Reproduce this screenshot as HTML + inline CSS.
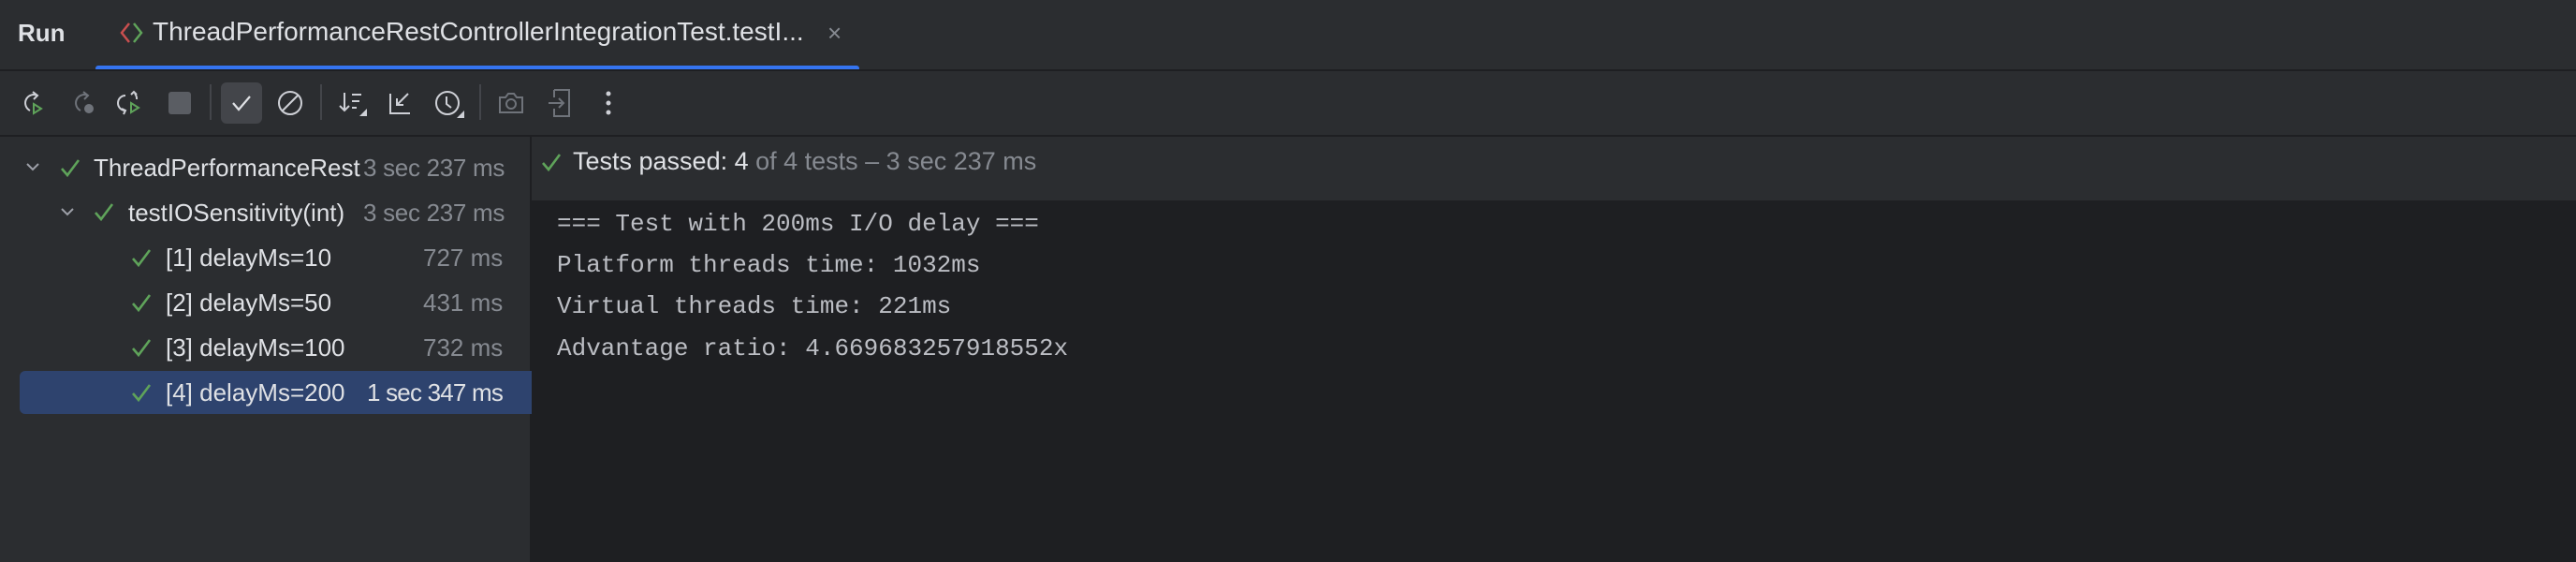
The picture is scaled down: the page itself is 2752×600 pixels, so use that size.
<!DOCTYPE html>
<html><head><style>
*{margin:0;padding:0;box-sizing:border-box}
body{width:2752px;height:600px;background:#2b2d30;position:relative;overflow:hidden;font-family:"Liberation Sans",sans-serif;color:#dfe1e5}
.abs{position:absolute}
.t{font-size:26px;white-space:nowrap;line-height:30px}
.gray{color:#868a91}
.mono{font-family:"Liberation Mono",monospace;font-size:26px;color:#bcbec4;white-space:nowrap;line-height:30px}
svg{position:absolute;overflow:visible}
</style></head><body>
<!-- tab bar -->
<div class="abs t" style="left:19px;top:20px;font-weight:bold">Run</div>
<svg style="left:126px;top:22px" width="30" height="26" viewBox="0 0 30 26"><path d="M12 3 L4 13 L12 23" fill="none" stroke="#c94f4f" stroke-width="2.5"/><path d="M17 3 L25 13 L17 23" fill="none" stroke="#5fa35a" stroke-width="2.5"/></svg>
<div class="abs t" style="left:163px;top:19px;font-size:28px">ThreadPerformanceRestControllerIntegrationTest.testI...</div>
<div class="abs t gray" style="left:884px;top:20px">×</div>
<div class="abs" style="left:102px;top:70px;width:816px;height:6px;background:#3574f0;border-radius:3px"></div>
<div class="abs" style="left:0;top:74px;width:2752px;height:2px;background:#1e1f22"></div>
<!-- toolbar -->
<div class="abs" style="left:236px;top:88px;width:44px;height:44px;background:#43454a;border-radius:6px"></div>
<div class="abs" style="left:224px;top:90px;width:2px;height:38px;background:#43454a"></div>
<div class="abs" style="left:342px;top:90px;width:2px;height:38px;background:#43454a"></div>
<div class="abs" style="left:512px;top:90px;width:2px;height:38px;background:#43454a"></div>
<svg style="left:22px;top:96px" width="28" height="28" viewBox="0 0 28 28" fill="none" stroke-width="2"><path d="M10 22 A8 8 0 1 1 18 6" stroke="#ced0d6"/><path d="M13 2 L18 6 L14 10" stroke="#ced0d6"/><path d="M14 15 L22 20 L14 25Z" stroke="#5fa35a"/></svg>
<svg style="left:76px;top:96px" width="28" height="28" viewBox="0 0 28 28" fill="none" stroke-width="2"><path d="M10 22 A8 8 0 1 1 18 6" stroke="#6f737a"/><path d="M13 2 L18 6 L14 10" stroke="#6f737a"/><circle cx="19" cy="20" r="5" fill="#6f737a"/></svg>
<svg style="left:126px;top:96px" width="28" height="28" viewBox="0 0 28 28" fill="none" stroke-width="2"><path d="M8 6 A8 8 0 0 0 8 22" stroke="#ced0d6"/><path d="M4 20 L8 22 L6 26" stroke="#ced0d6"/><path d="M18 4 A8 8 0 0 1 20 10" stroke="#ced0d6"/><path d="M14 5 L17 2 L20 5" stroke="#ced0d6"/><path d="M14 14 L22 19 L14 24Z" stroke="#5fa35a"/></svg>
<div class="abs" style="left:180px;top:98px;width:24px;height:24px;background:#5a5d63;border-radius:3px"></div>
<svg style="left:246px;top:98px" width="24" height="24" viewBox="0 0 24 24" fill="none" stroke="#dfe1e5" stroke-width="2.2"><path d="M3 12 L9 19 L21 5"/></svg>
<svg style="left:296px;top:96px" width="28" height="28" viewBox="0 0 28 28" fill="none" stroke="#ced0d6" stroke-width="2"><circle cx="14" cy="14" r="12"/><path d="M6 22 L22 6"/></svg>
<svg style="left:362px;top:96px" width="32" height="30" viewBox="0 0 32 30" fill="none" stroke="#ced0d6" stroke-width="2"><path d="M6 3 V22 M1 17 L6 22 L11 17"/><path d="M14 5 H24 M14 12 H22 M14 19 H19"/><path d="M30 20 V28 H22Z" fill="#ced0d6" stroke="none"/></svg>
<svg style="left:414px;top:96px" width="28" height="28" viewBox="0 0 28 28" fill="none" stroke="#ced0d6" stroke-width="2"><path d="M3 4 V25 H24"/><path d="M22 4 L10 16 M10 9 V16 H17"/></svg>
<svg style="left:464px;top:96px" width="34" height="32" viewBox="0 0 34 32" fill="none" stroke="#ced0d6" stroke-width="2"><circle cx="14" cy="14" r="12"/><path d="M13 7 V15 L18 19"/><path d="M32 22 V30 H24Z" fill="#ced0d6" stroke="none"/></svg>
<svg style="left:532px;top:97px" width="28" height="26" viewBox="0 0 28 26" fill="none" stroke="#6f737a" stroke-width="2"><path d="M2 7 H8 L11 3 H17 L20 7 H26 V23 H2Z"/><circle cx="14" cy="14" r="5"/></svg>
<svg style="left:586px;top:94px" width="26" height="32" viewBox="0 0 26 32" fill="none" stroke="#6f737a" stroke-width="2"><path d="M6 2 H22 V30 H6 V22 M6 10 V2"/><path d="M0 16 H16 M11 11 L16 16 L11 21"/></svg>
<svg style="left:646px;top:96px" width="8" height="28" viewBox="0 0 8 28" fill="#ced0d6"><circle cx="4" cy="4" r="2.5"/><circle cx="4" cy="14" r="2.5"/><circle cx="4" cy="24" r="2.5"/></svg>
<div class="abs" style="left:0;top:144px;width:2752px;height:2px;background:#1e1f22"></div>
<!-- left panel -->
<div class="abs" style="left:566px;top:146px;width:2px;height:454px;background:#1e1f22"></div>
<div class="abs" style="left:21px;top:396px;width:547px;height:46px;background:#2e436e;border-radius:6px 0 0 6px"></div>
<svg style="left:27px;top:170px" width="16" height="16" viewBox="0 0 16 16" fill="none" stroke="#9da0a8" stroke-width="2"><path d="M2 5 L8 11 L14 5"/></svg>
<svg style="left:64px;top:168px" width="22" height="22" viewBox="0 0 22 22" fill="none" stroke="#5fa35a" stroke-width="2.6"><path d="M2 12 L8 19 L20 3"/></svg>
<div class="abs t" style="left:100px;top:164px;width:285px;overflow:hidden">ThreadPerformanceRestControllerIntegrationTest</div>
<div class="abs t gray" style="left:388px;top:164px;letter-spacing:-0.3px">3 sec 237 ms</div>
<svg style="left:64px;top:218px" width="16" height="16" viewBox="0 0 16 16" fill="none" stroke="#9da0a8" stroke-width="2"><path d="M2 5 L8 11 L14 5"/></svg>
<svg style="left:100px;top:215px" width="22" height="22" viewBox="0 0 22 22" fill="none" stroke="#5fa35a" stroke-width="2.6"><path d="M2 12 L8 19 L20 3"/></svg>
<div class="abs t" style="left:137px;top:212px;width:248px;overflow:hidden">testIOSensitivity(int)</div>
<div class="abs t gray" style="left:388px;top:212px;letter-spacing:-0.3px">3 sec 237 ms</div>
<svg style="left:140px;top:264px" width="22" height="22" viewBox="0 0 22 22" fill="none" stroke="#5fa35a" stroke-width="2.6"><path d="M2 12 L8 19 L20 3"/></svg>
<div class="abs t" style="left:177px;top:260px">[1] delayMs=10</div>
<div class="abs t gray" style="left:452px;top:260px">727 ms</div>
<svg style="left:140px;top:312px" width="22" height="22" viewBox="0 0 22 22" fill="none" stroke="#5fa35a" stroke-width="2.6"><path d="M2 12 L8 19 L20 3"/></svg>
<div class="abs t" style="left:177px;top:308px">[2] delayMs=50</div>
<div class="abs t gray" style="left:452px;top:308px">431 ms</div>
<svg style="left:140px;top:360px" width="22" height="22" viewBox="0 0 22 22" fill="none" stroke="#5fa35a" stroke-width="2.6"><path d="M2 12 L8 19 L20 3"/></svg>
<div class="abs t" style="left:177px;top:356px">[3] delayMs=100</div>
<div class="abs t gray" style="left:452px;top:356px">732 ms</div>
<svg style="left:140px;top:408px" width="22" height="22" viewBox="0 0 22 22" fill="none" stroke="#5fa35a" stroke-width="2.6"><path d="M2 12 L8 19 L20 3"/></svg>
<div class="abs t" style="left:177px;top:404px">[4] delayMs=200</div>
<div class="abs t" style="left:392px;top:404px;letter-spacing:-0.8px">1 sec 347 ms</div>
<!-- right -->
<svg style="left:578px;top:162px" width="22" height="22" viewBox="0 0 22 22" fill="none" stroke="#5fa35a" stroke-width="2.6"><path d="M2 12 L8 19 L20 3"/></svg>
<div class="abs t" style="left:612px;top:157px;font-size:27px">Tests passed: 4 <span class="gray">of 4 tests – 3 sec 237 ms</span></div>
<div class="abs" style="left:568px;top:214px;width:2184px;height:386px;background:#1e1f22"></div>
<div class="abs mono" style="left:595px;top:224px">=== Test with 200ms I/O delay ===</div>
<div class="abs mono" style="left:595px;top:268px">Platform threads time: 1032ms</div>
<div class="abs mono" style="left:595px;top:312px">Virtual threads time: 221ms</div>
<div class="abs mono" style="left:595px;top:357px">Advantage ratio: 4.669683257918552x</div>
</body></html>
